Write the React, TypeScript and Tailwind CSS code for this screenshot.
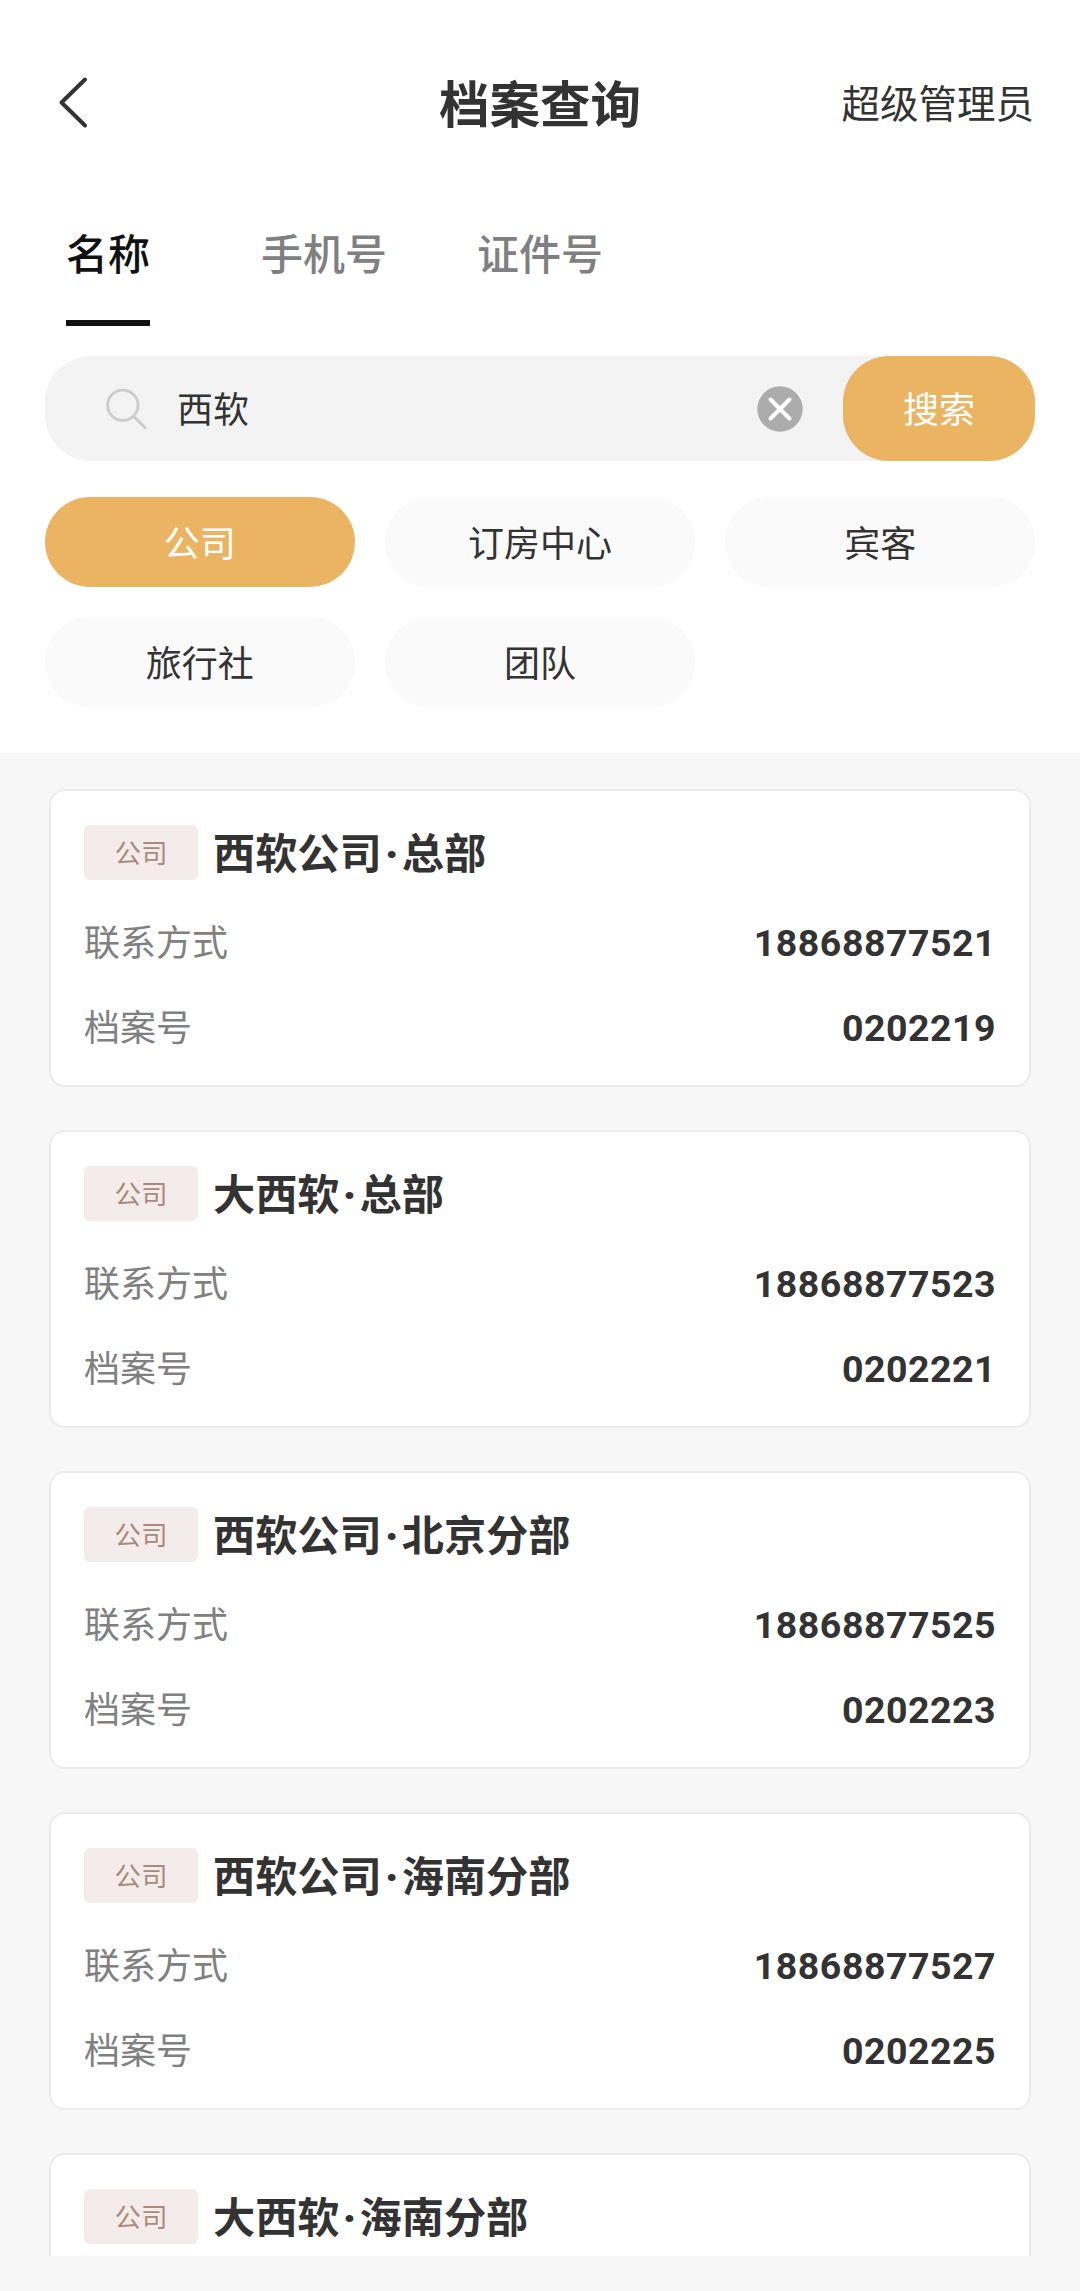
import React, { useState } from 'react';

interface ProfileRecord {
  type: string;
  name: string;
  branch: string;
  phone?: string;
  profileNo?: string;
}

const searchTabs: string[] = ['名称', '手机号', '证件号'];

const categories: string[] = ['公司', '订房中心', '宾客', '旅行社', '团队'];

const records: ProfileRecord[] = [
  { type: '公司', name: '西软公司', branch: '总部', phone: '18868877521', profileNo: '0202219' },
  { type: '公司', name: '大西软', branch: '总部', phone: '18868877523', profileNo: '0202221' },
  { type: '公司', name: '西软公司', branch: '北京分部', phone: '18868877525', profileNo: '0202223' },
  { type: '公司', name: '西软公司', branch: '海南分部', phone: '18868877527', profileNo: '0202225' },
  { type: '公司', name: '大西软', branch: '海南分部' },
];

const Header: React.FC = () => (
  <header className="grid h-[208px] grid-cols-3 items-center px-[46px]">
    <button aria-label="返回" className="justify-self-start pb-[3px] pl-[12px]">
      <svg className="h-[56px] w-[32px]" viewBox="0 0 32 56" fill="none" stroke="#333333">
        <path strokeLinecap="round" strokeLinejoin="round" strokeWidth={4} d="M27 4.5L3.5 27.5L27 50.5" />
      </svg>
    </button>
    <h1 className="justify-self-center pb-[5px] text-[50.5px] leading-none font-bold whitespace-nowrap">档案查询</h1>
    <span className="justify-self-end pb-[6px] text-[38.5px] leading-none whitespace-nowrap">超级管理员</span>
  </header>
);

interface SearchBarProps {
  value: string;
  onChange: (value: string) => void;
}

const SearchBar: React.FC<SearchBarProps> = ({ value, onChange }) => (
  <div className="mx-[45px] flex h-[105px] items-center rounded-[46px] bg-[#f3f3f3]">
    <svg className="ml-[60px] h-[44px] w-[44px] shrink-0" viewBox="0 0 44 44" fill="none" stroke="#cccccc">
      <circle cx="17.8" cy="18.3" r="15.2" strokeWidth={2.8} />
      <path strokeLinecap="round" strokeWidth={3} d="M28.8 29.5L40 40.5" />
    </svg>
    <input
      className="ml-[28px] min-w-0 flex-1 bg-transparent pb-[4px] text-[36px] outline-none"
      value={value}
      onChange={(e) => onChange(e.target.value)}
    />
    <button aria-label="清除" className="mr-[40px] shrink-0" onClick={() => onChange('')}>
      <svg className="h-[46px] w-[46px]" viewBox="0 0 46 46" fill="none">
        <circle cx="23" cy="23" r="22.7" fill="#acacac" />
        <path stroke="#ffffff" strokeLinecap="round" strokeWidth={4} d="M13.5 13.5L32.5 32.5M32.5 13.5L13.5 32.5" />
      </svg>
    </button>
    <button className="h-full w-[192px] shrink-0 rounded-[46px] bg-[#ebb463] pb-[3px] text-[36px] text-white">
      搜索
    </button>
  </div>
);

const RecordCard: React.FC<{ record: ProfileRecord }> = ({ record }) => (
  <div className="h-[298px] shrink-0 rounded-[16px] border-[2.5px] border-[#ebebeb] bg-white px-[33px] pt-[34px]">
    <div className="flex h-[55px] items-center">
      <span className="flex h-full w-[114px] items-center justify-center rounded-[6px] bg-[#f3ecea] pb-[2px] text-[26.5px] text-[#a98a7c]">
        {record.type}
      </span>
      <h2 className="ml-[15px] pt-[1px] text-[42.2px] leading-none font-bold whitespace-nowrap">
        {record.name}
        <span className="inline-block w-[20px] text-center font-['Roboto'] font-black">·</span>
        {record.branch}
      </h2>
    </div>
    {record.phone && (
      <dl className="mt-[19px]">
        <div className="flex h-[85px] items-center justify-between">
          <dt className="pb-[3px] text-[36px] text-[#808080]">联系方式</dt>
          <dd className="pt-[3px] font-['Roboto'] text-[37.5px] font-bold tracking-[0.5px]">{record.phone}</dd>
        </div>
        <div className="flex h-[85px] items-center justify-between">
          <dt className="pb-[3px] text-[36px] text-[#808080]">档案号</dt>
          <dd className="pt-[3px] font-['Roboto'] text-[37.5px] font-bold tracking-[0.5px]">{record.profileNo}</dd>
        </div>
      </dl>
    )}
  </div>
);

export default function App() {
  const [activeTab, setActiveTab] = useState<string>('名称');
  const [category, setCategory] = useState<string>('公司');
  const [keyword, setKeyword] = useState<string>('西软');

  return (
    <div className="flex h-[2291px] w-[1080px] flex-col overflow-hidden bg-[#f7f7f7] pb-[35px] font-['Noto_Sans_CJK_SC',sans-serif] text-[#333333]">
      <section className="h-[753px] shrink-0 bg-white">
        <Header />

        <nav className="flex h-[118px]">
          {searchTabs.map((tab) => (
            <button
              key={tab}
              onClick={() => setActiveTab(tab)}
              className="flex w-[216px] flex-col items-center justify-end"
            >
              <span
                className={`flex h-full flex-col justify-between pt-[23px] text-[42px] leading-none font-medium ${
                  activeTab === tab ? 'border-b-[6px] border-[#111111] text-[#111111]' : 'text-[#808080]'
                }`}
              >
                {tab}
              </span>
            </button>
          ))}
        </nav>

        <div className="mt-[30px]">
          <SearchBar value={keyword} onChange={setKeyword} />
        </div>

        <div className="mx-[45px] mt-[36px] grid grid-cols-3 gap-x-[30.5px] gap-y-[30px]">
          {categories.map((item) => (
            <button
              key={item}
              onClick={() => setCategory(item)}
              className={`h-[90px] rounded-full pb-[3px] text-[36px] ${
                category === item ? 'bg-[#ebb463] text-white' : 'bg-[#fafafa]'
              }`}
            >
              {item}
            </button>
          ))}
        </div>
      </section>

      {/* Result list, cut off above the bottom safe area */}
      <main className="flex min-h-0 flex-1 flex-col gap-[43px] overflow-hidden px-[49px] pt-[36px]">
        {records.map((record) => (
          <RecordCard key={`${record.name}-${record.branch}`} record={record} />
        ))}
      </main>
    </div>
  );
}
